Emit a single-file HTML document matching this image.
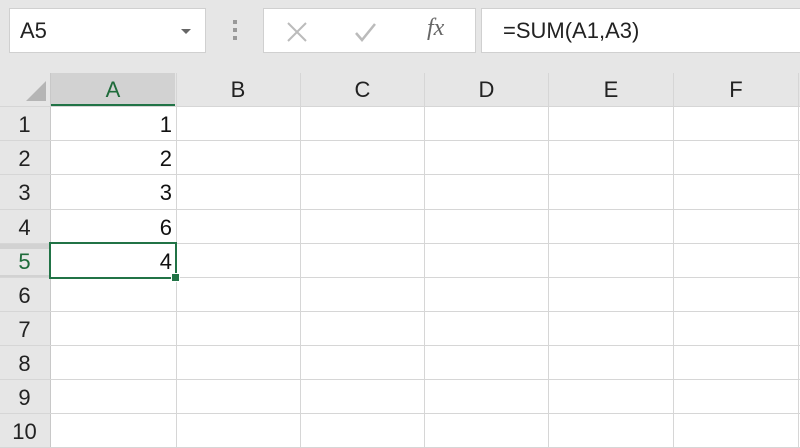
<!DOCTYPE html><html><head><style>
body{margin:0;width:800px;height:448px;overflow:hidden;background:#fff;font-family:"Liberation Sans",Arial,sans-serif;position:relative}
.a{position:absolute}
.top{left:0;top:0;width:800px;height:73px;background:#e6e6e6}
.box{background:#fff;border:1px solid #d0d0d0}
.hl{height:1px;background:#d6d6d6;left:0;width:800px}
.vl{width:1px;background:#d6d6d6;top:73px;height:375px}
.ch{top:73px;height:33px;line-height:33px;text-align:center;font-size:22px;color:#222;background:#e6e6e6}
.rh{left:0;width:49px;text-align:center;font-size:22px;color:#222;background:#e6e6e6}
.v{font-size:22px;color:#111;text-align:right;left:50px;width:122px}
</style></head><body>
<div class="a top"></div>
<div class="a box" style="left:9px;top:8px;width:195px;height:43px"></div>
<div class="a" style="left:20px;top:18px;font-size:22px;color:#222">A5</div>
<div class="a" style="left:181px;top:29px;width:0;height:0;border-left:5px solid transparent;border-right:5px solid transparent;border-top:5px solid #666"></div>
<div class="a" style="left:233px;top:20px;width:4px;height:4px;background:#999;box-shadow:0 8px 0 #999,0 16px 0 #999"></div>
<div class="a box" style="left:263px;top:8px;width:211px;height:43px"></div>
<svg class="a" style="left:284px;top:19px" width="110" height="24"><path d="M4 4L22 22M22 4L4 22" stroke="#bbb" stroke-width="2" fill="none"/><path d="M72 14L78 21L91 5" stroke="#bbb" stroke-width="2.5" fill="none"/></svg>
<div class="a" style="left:427px;top:15px;font-size:24px;font-style:italic;font-family:'Liberation Serif',serif;color:#666">fx</div>
<div class="a box" style="left:481px;top:8px;width:330px;height:43px"></div>
<div class="a" style="left:503px;top:18px;font-size:22px;color:#222">=SUM(A1,A3)</div>
<div class="a" style="left:0;top:73px;width:800px;height:33px;background:#e6e6e6"></div>
<svg class="a" style="left:24px;top:79px" width="24" height="24"><path d="M22 2L22 22L2 22Z" fill="#b5b5b5"/></svg>
<div class="a ch" style="left:51px;width:124px;background:#d2d2d2;color:#1e6b3a;border-bottom:2px solid #217346;height:31px">A</div>
<div class="a ch" style="left:176px;width:124px">B</div>
<div class="a ch" style="left:301px;width:123px">C</div>
<div class="a ch" style="left:425px;width:123px">D</div>
<div class="a ch" style="left:549px;width:124px">E</div>
<div class="a ch" style="left:674px;width:124px">F</div>
<div class="a" style="left:0;top:106px;width:50px;height:342px;background:#e6e6e6"></div>
<div class="a" style="left:0;top:243px;width:50px;height:34px;background:#d2d2d2"></div>
<div class="a vl" style="left:50px;background:#c8c8c8"></div>
<div class="a vl" style="left:176px"></div><div class="a vl" style="left:300px"></div><div class="a vl" style="left:424px"></div><div class="a vl" style="left:548px"></div><div class="a vl" style="left:673px"></div><div class="a vl" style="left:798px"></div>
<div class="a hl" style="top:106px"></div><div class="a hl" style="top:140px"></div><div class="a hl" style="top:174px"></div><div class="a hl" style="top:209px"></div><div class="a hl" style="top:243px"></div><div class="a hl" style="top:277px"></div><div class="a hl" style="top:311px"></div><div class="a hl" style="top:345px"></div><div class="a hl" style="top:379px"></div><div class="a hl" style="top:413px"></div><div class="a hl" style="top:447px"></div>
<div class="a rh" style="top:112px">1</div><div class="a rh" style="top:146px">2</div><div class="a rh" style="top:180px">3</div><div class="a rh" style="top:215px">4</div><div class="a rh" style="top:249px;color:#1e6b3a">5</div><div class="a rh" style="top:283px">6</div><div class="a rh" style="top:317px">7</div><div class="a rh" style="top:351px">8</div><div class="a rh" style="top:385px">9</div><div class="a rh" style="top:419px">10</div>
<div class="a v" style="top:112px">1</div><div class="a v" style="top:146px">2</div><div class="a v" style="top:180px">3</div><div class="a v" style="top:215px">6</div><div class="a v" style="top:249px">4</div>
<div class="a" style="left:49px;top:242px;width:124px;height:33px;border:2px solid #217346"></div>
<div class="a" style="left:171px;top:273px;width:7px;height:7px;background:#217346;border:1px solid #fff"></div>
</body></html>
